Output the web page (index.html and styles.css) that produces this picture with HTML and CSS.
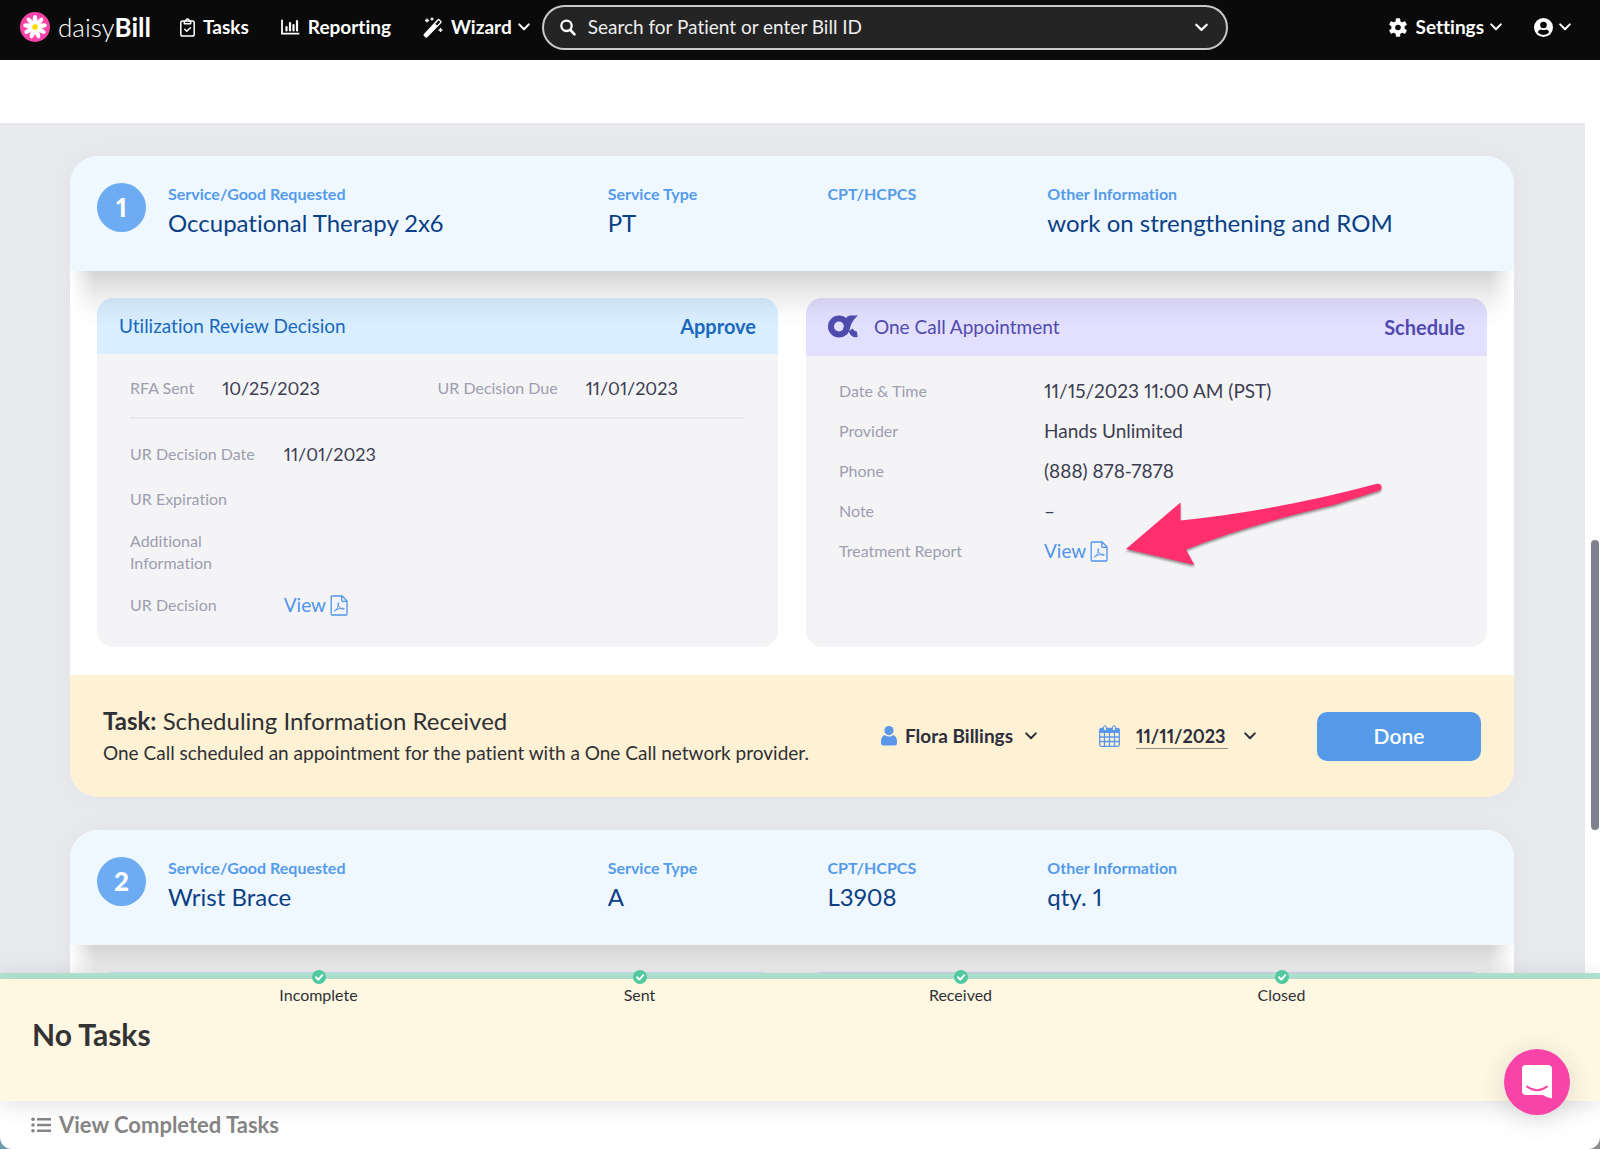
FILE: index.html
```html
<!DOCTYPE html>
<html lang="en">
<head>
<meta charset="utf-8">
<meta name="viewport" content="width=device-width, initial-scale=1">
<title>daisyBill</title>
<link rel="stylesheet" href="styles.css">
</head>
<body>
<svg class="sprite" aria-hidden="true">
  <symbol id="chevron" viewBox="0 0 12 8"><path d="M1.2 1.4 6 6.2l4.800-4.800" fill="none" stroke="currentColor" stroke-width="2" stroke-linecap="round" stroke-linejoin="round"/></symbol>
  <symbol id="pdf" viewBox="0 0 18 21"><path d="M1.200 2V19q0 1 1 1H16q1 0 1-1V6L12.200 1H2.200q-1 0-1 1zM11.800 1.200V5.400q0 1 1 1H17" fill="none" stroke="currentColor" stroke-width="1.300"/><path d="M4.200 16.200C6.800 14.800 8.800 11 8.700 8.600c0-1.400-1-1.300-.9.1.3 2.700 2.800 5.400 5.600 5.600 1.400 0 1.200-1.100-.1-1.100-2.400 0-5.600.8-7.600 1.900" fill="none" stroke="currentColor" stroke-width="1" stroke-linecap="round"/></symbol>
  <symbol id="done" viewBox="0 0 14 14"><circle cx="7" cy="7" r="7" fill="#50c8a0"/><path d="M4 7.300 6.300 9.600l4-4.400" fill="none" stroke="#fff" stroke-width="2" stroke-linecap="round" stroke-linejoin="round"/></symbol>
</svg>

<div class="app">
  <header class="nav">
    <a class="brand" href="#">
      <svg width="30" height="30" viewBox="0 0 30 30" aria-hidden="true">
        <circle cx="15" cy="15" r="15" fill="#f843a8"/>
        <g fill="#fff">
          <ellipse cx="15" cy="8" rx="2.300" ry="5"/>
          <ellipse cx="15" cy="8" rx="2.300" ry="5" transform="rotate(40 15 15)"/>
          <ellipse cx="15" cy="8" rx="2.300" ry="5" transform="rotate(80 15 15)"/>
          <ellipse cx="15" cy="8" rx="2.300" ry="5" transform="rotate(120 15 15)"/>
          <ellipse cx="15" cy="8" rx="2.300" ry="5" transform="rotate(160 15 15)"/>
          <ellipse cx="15" cy="8" rx="2.300" ry="5" transform="rotate(200 15 15)"/>
          <ellipse cx="15" cy="8" rx="2.300" ry="5" transform="rotate(240 15 15)"/>
          <ellipse cx="15" cy="8" rx="2.300" ry="5" transform="rotate(280 15 15)"/>
          <ellipse cx="15" cy="8" rx="2.300" ry="5" transform="rotate(320 15 15)"/>
        </g>
        <circle cx="15" cy="15" r="2.800" fill="#ffd800"/>
      </svg>
      <span class="brand-name">daisy<b>Bill</b></span>
    </a>
    <nav class="nav-links">
      <a class="nav-item" href="#">
        <svg width="15" height="19" viewBox="0 0 15 19" aria-hidden="true"><g fill="none" stroke="currentColor" stroke-width="1.500" stroke-linejoin="round" stroke-linecap="round"><rect x=".8" y="3" width="13.400" height="15" rx="1.800"/><path d="M4.300 5.800V3.200h1.500Q6 1 7.500 1t1.700 2.200h1.500v2.600zM4.800 11.300l2 2 3.600-3.600"/></g></svg>
        Tasks
      </a>
      <a class="nav-item" href="#">
        <svg width="19" height="16" viewBox="0 0 19 16" aria-hidden="true"><path d="M1 .8V14.600H18.300" fill="none" stroke="currentColor" stroke-width="1.800"/><path d="M5.500 8v3.500M9 4v7.500M12.500 6v5.500M16 2v9.500" stroke="currentColor" stroke-width="2.200" stroke-linecap="round"/></svg>
        Reporting
      </a>
      <button class="nav-item" type="button">
        <svg width="20" height="21" viewBox="0 0 20 21" aria-hidden="true"><path d="M.9 17 14.600 2.300q1-1 2-.1l1.700 1.700q1 1 0 2L4.300 20.300q-1 .7-2 0L.8 18.800q-.7-.9.100-1.800z" fill="currentColor"/><path d="m12.300 6.900 3.400-3.700 1.700 1.700-3.400 3.700z" fill="#0a0a0a"/><path d="M4 1.500v4M2 3.500h4M9 .5v3M7.500 2h3M17.500 11v4M15.500 13h4" stroke="currentColor" stroke-width="1.300"/></svg>
        Wizard
        <svg class="caret" width="12" height="8" aria-hidden="true"><use href="#chevron"/></svg>
      </button>
    </nav>
    <form class="search" role="search">
      <svg width="16" height="17" viewBox="0 0 16 17" aria-hidden="true"><circle cx="6.500" cy="6.800" r="5.200" fill="none" stroke="currentColor" stroke-width="2.300"/><path d="m10.500 11 4 4.300" stroke="currentColor" stroke-width="2.600" stroke-linecap="round"/></svg>
      <input type="text" placeholder="Search for Patient or enter Bill ID" aria-label="Search for Patient or enter Bill ID">
      <button type="button" aria-label="Search options"><svg width="13" height="9" aria-hidden="true"><use href="#chevron"/></svg></button>
    </form>
    <div class="nav-right">
      <button class="nav-item" type="button">
        <svg width="18" height="19" viewBox="0 0 18 19" aria-hidden="true"><g fill="currentColor"><rect x="6.800" y=".3" width="4.400" height="18.400" rx="1"/><rect x="6.800" y=".3" width="4.400" height="18.400" rx="1" transform="rotate(60 9 9.500)"/><rect x="6.800" y=".3" width="4.400" height="18.400" rx="1" transform="rotate(120 9 9.500)"/><circle cx="9" cy="9.500" r="6.700"/></g><circle cx="9" cy="9.500" r="2.800" fill="#0a0a0a"/></svg>
        Settings
        <svg class="caret" width="12" height="8" aria-hidden="true"><use href="#chevron"/></svg>
      </button>
      <button class="nav-item" type="button" aria-label="Account">
        <svg width="19" height="19" viewBox="0 0 19 19" aria-hidden="true"><circle cx="9.500" cy="9.500" r="9.500" fill="currentColor"/><circle cx="9.500" cy="7" r="3.300" fill="#0a0a0a"/><path d="M3.700 14.300Q4.500 11.600 7 11.600q2.500 1 5 0 2.500 0 3.300 2.700-2.300 2.600-5.800 2.600t-5.800-2.600z" fill="#0a0a0a"/></svg>
        <svg class="caret" width="12" height="8" aria-hidden="true"><use href="#chevron"/></svg>
      </button>
    </div>
  </header>

  <main class="page">
    <div class="requests">
      <article class="card">
        <header class="card-head">
          <span class="number">1</span>
          <dl class="summary">
            <div><dt>Service/Good Requested</dt><dd>Occupational Therapy 2x6</dd></div>
            <div><dt>Service Type</dt><dd>PT</dd></div>
            <div><dt>CPT/HCPCS</dt><dd></dd></div>
            <div><dt>Other Information</dt><dd>work on strengthening and ROM</dd></div>
          </dl>
        </header>
        <div class="panels">
          <section class="panel">
            <header class="panel-head blue"><h2>Utilization Review Decision</h2><strong>Approve</strong></header>
            <div class="panel-body">
              <dl class="dates">
                <div><dt>RFA Sent</dt><dd>10/25/2023</dd></div>
                <div><dt>UR Decision Due</dt><dd>11/01/2023</dd></div>
              </dl>
              <dl class="details review">
                <div><dt>UR Decision Date</dt><dd>11/01/2023</dd></div>
                <div><dt>UR Expiration</dt><dd></dd></div>
                <div><dt>Additional Information</dt><dd></dd></div>
                <div><dt>UR Decision</dt><dd><a class="view" href="#">View <svg width="18" height="21" aria-hidden="true"><use href="#pdf"/></svg></a></dd></div>
              </dl>
            </div>
          </section>
          <section class="panel">
            <header class="panel-head purple">
              <svg width="30" height="23" viewBox="0 0 30 23" aria-hidden="true"><circle cx="11" cy="11.500" r="8" fill="none" stroke="currentColor" stroke-width="6"/><path d="M30 .6h-6.500C19 .6 17.500 3 17 6.500l-2.200 9 4 4.500 3-6.500C23 8.500 26 4 30 .6zM20.500 16.500l4-3q1.500 2.500 4.500 3.200L29.600 22q-6 1.500-9.100-5.500z" fill="currentColor"/></svg>
              <h2>One Call Appointment</h2><strong>Schedule</strong>
            </header>
            <div class="panel-body">
              <dl class="details appointment">
                <div><dt>Date &amp; Time</dt><dd>11/15/2023 11:00 AM (PST)</dd></div>
                <div><dt>Provider</dt><dd>Hands Unlimited</dd></div>
                <div><dt>Phone</dt><dd>(888) 878-7878</dd></div>
                <div><dt>Note</dt><dd>–</dd></div>
                <div><dt>Treatment Report</dt><dd><a class="view" href="#">View <svg width="18" height="21" aria-hidden="true"><use href="#pdf"/></svg></a>
                  <svg class="arrow" width="262" height="90" viewBox="0 0 262 90" aria-hidden="true"><path d="M2 67 56.500 20.500V38.500Q156 28 253 1.800q5-.2 4.500 4.200-.2 2-2.500 2.700L210 23Q120 44 62 67.500L70.500 83z" fill="#ff2f6e"/></svg></dd></div>
              </dl>
            </div>
          </section>
        </div>
        <footer class="task">
          <div class="task-text">
            <h3><b>Task:</b> Scheduling Information Received</h3>
            <p>One Call scheduled an appointment for the patient with a One Call network provider.</p>
          </div>
          <label class="assignee">
            <svg width="16" height="20" viewBox="0 0 16 20" aria-hidden="true"><circle cx="8" cy="4.600" r="4.600" fill="#5a97ea"/><path d="M3.600 9q4.400 3.200 8.800 0Q16 10.500 16 15.500V17q0 2.500-2.500 2.500h-11Q0 19.500 0 17v-1.500Q0 10.500 3.600 9z" fill="#5a97ea"/></svg>
            <select aria-label="Assigned to"><option>Flora Billings</option></select>
            <svg width="12" height="8" aria-hidden="true"><use href="#chevron"/></svg>
          </label>
          <label class="due">
            <svg width="21" height="22" viewBox="0 0 21 22" aria-hidden="true"><g fill="none" stroke="#5a97ea" stroke-width="1.300"><rect x=".7" y="3.500" width="19.600" height="17.800" rx="1.500"/><path d="M1 12h19M1 16.500h19M5.500 8v13M10.500 8v13M15.500 8v13"/></g><path d="M1 3.500h19V8H1z" fill="#5a97ea"/><rect x="4.600" y=".7" width="2.800" height="5" rx="1.400" fill="#fef1d4" stroke="#5a97ea"/><rect x="13.600" y=".7" width="2.800" height="5" rx="1.400" fill="#fef1d4" stroke="#5a97ea"/></svg>
            <input type="text" value="11/11/2023" aria-label="Due date">
            <svg width="12" height="8" aria-hidden="true"><use href="#chevron"/></svg>
          </label>
          <button class="done" type="button">Done</button>
        </footer>
      </article>

      <article class="card">
        <header class="card-head">
          <span class="number">2</span>
          <dl class="summary">
            <div><dt>Service/Good Requested</dt><dd>Wrist Brace</dd></div>
            <div><dt>Service Type</dt><dd>A</dd></div>
            <div><dt>CPT/HCPCS</dt><dd>L3908</dd></div>
            <div><dt>Other Information</dt><dd>qty. 1</dd></div>
          </dl>
        </header>
        <div class="panels">
          <section class="panel"><div class="panel-head blue"></div></section>
          <section class="panel"><div class="panel-head purple"></div></section>
        </div>
      </article>
    </div>
    <div class="scrollbar"></div>
  </main>

  <footer class="tray">
    <ol class="steps">
      <li><svg width="14" height="14" aria-hidden="true"><use href="#done"/></svg>Incomplete</li>
      <li><svg width="14" height="14" aria-hidden="true"><use href="#done"/></svg>Sent</li>
      <li><svg width="14" height="14" aria-hidden="true"><use href="#done"/></svg>Received</li>
      <li><svg width="14" height="14" aria-hidden="true"><use href="#done"/></svg>Closed</li>
    </ol>
    <div class="tray-tasks"><h2>No Tasks</h2></div>
    <div class="tray-base">
      <a class="completed" href="#"><svg width="20" height="16" viewBox="0 0 20 16" aria-hidden="true"><path d="M6 2.200h14M6 8h14M6 13.800h14" stroke="currentColor" stroke-width="2.400"/><g fill="currentColor"><circle cx="2" cy="2.200" r="1.800"/><circle cx="2" cy="8" r="1.800"/><circle cx="2" cy="13.800" r="1.800"/></g></svg>View Completed Tasks</a>
    </div>
  </footer>
  <button class="chat" type="button" aria-label="Open chat">
    <svg width="30" height="34" viewBox="0 0 30 34" aria-hidden="true"><path d="M4 0h22q4 0 4 4v29.500q-5-.5-9-3.500H4q-4 0-4-4V4q0-4 4-4z" fill="#fff"/><path d="M5 21.500q10 7.500 20 0" fill="none" stroke="#f843a8" stroke-width="2" stroke-linecap="round"/></svg>
  </button>
</div>
</body>
</html>
```
FILE: styles.css
```css
* { box-sizing: border-box; }

body {
  margin: 0;
  font-family: Lato, "Open Sans", sans-serif;
  font-size: 19px;
  line-height: 24px;
  font-variant-ligatures: none;
  font-variant-numeric: proportional-nums;
  color: #3b3c42;
  background: #fff;
}

h2, h3, p, dl, dd, ol { margin: 0; padding: 0; }
button, input, select { font: inherit; font-variant-ligatures: none; font-variant-numeric: proportional-nums; color: inherit; background: none; border: 0; padding: 0; margin: 0; }
button { cursor: pointer; }
a { color: inherit; text-decoration: none; }
svg { flex: none; display: block; }
.sprite { position: absolute; width: 0; height: 0; }

.app {
  position: relative;
  display: flex;
  flex-direction: column;
  height: 100vh;
  overflow: hidden;
}

/* Top navigation */
.nav {
  flex: none;
  display: flex;
  align-items: center;
  height: 60px;
  padding: 0 29px 6px 20px;
  background: #0a0a0a;
  color: #fff;
}
.brand { display: flex; align-items: center; gap: 8px; width: 160px; }
.brand-name { font-size: 26px; line-height: 32px; font-weight: 300; }
.brand-name b { font-weight: 700; }
.nav-links, .nav-right { display: flex; align-items: center; gap: 32px; }
.nav-item { display: flex; align-items: center; gap: 8px; font-size: 19px; font-weight: 700; white-space: nowrap; }
.nav-item .caret { margin-left: -2px; }
.search {
  flex: 1;
  display: flex;
  align-items: center;
  gap: 12px;
  max-width: 686px;
  height: 45px;
  margin-left: 12px;
  padding: 0 18px 0 16px;
  border: 2px solid #c8c8c8;
  border-radius: 23px;
  background: #242424;
}
.search input { flex: 1; min-width: 0; font-size: 19px; outline: 0; }
.search input::placeholder { color: #eee; opacity: 1; }
.nav-right { margin-left: auto; }

/* Request list */
.page {
  position: relative;
  flex: 1;
  min-height: 0;
  overflow: hidden;
  padding: 63px 15px 0 0;
}
.requests {
  display: flex;
  flex-direction: column;
  gap: 33px;
  padding: 33px 71px 33px 70px;
  background: #e8e9ed;
}
.scrollbar {
  position: absolute;
  top: 480px;
  right: 1px;
  width: 8px;
  height: 290px;
  border-radius: 4px;
  background: #80818e;
}

.card { border-radius: 28px; background: #fff; box-shadow: 0 0 24px rgba(0, 0, 0, .03); }
.card-head {
  position: relative;
  display: flex;
  gap: 22px;
  height: 115px;
  padding: 27px 27px 0;
  border-radius: 28px 28px 0 0;
  background: #f0f8ff;
}
/* soft shadow cast over the panels below the heading */
.card-head::after {
  content: "";
  position: absolute;
  inset: 100% 0 auto 0;
  height: 56px;
  background: linear-gradient(rgba(0, 0, 0, .17), rgba(0, 0, 0, .08) 40%, rgba(0, 0, 0, .02) 75%, transparent);
  -webkit-mask-image: linear-gradient(90deg, transparent, #000 24px, #000 calc(100% - 24px), transparent);
  mask-image: linear-gradient(90deg, transparent, #000 24px, #000 calc(100% - 24px), transparent);
  pointer-events: none;
}
.number {
  flex: none;
  width: 49px;
  height: 49px;
  border-radius: 50%;
  background: #6dabf3;
  color: #fff;
  font-size: 26px;
  line-height: 49px;
  font-weight: 900;
  text-align: center;
}
.summary { flex: 1; display: grid; grid-template-columns: 2fr 1fr 1fr 2fr; }
.summary dt { font-size: 16px; line-height: 22px; font-weight: 700; color: #559beb; }
.summary dd { font-size: 24px; line-height: 36px; color: #0b3f86; white-space: nowrap; }

.panels { display: grid; grid-template-columns: 1fr 1fr; gap: 28px; padding: 27px 27px 28px; }
.panel { border-radius: 16px; background: #f4f4f6; }
.panel-head {
  display: flex;
  align-items: center;
  height: 56px;
  padding: 0 22px 1px;
  border-radius: 16px 16px 0 0;
}
.panel-head h2 { font-size: 19px; font-weight: 400; }
.panel-head strong { margin-left: auto; font-size: 20px; font-weight: 700; }
.panel-head svg { margin-right: 16px; }
.blue { background: #d9efff; color: #1b68bd; }
.purple { height: 58px; background: #e2dfff; color: #504cae; }

.panel-body { padding: 20px 33px 16px; }
.panel-body dt { font-size: 16px; line-height: 22px; color: #9d9eb0; }
.panel-body dd { font-size: 19px; color: #3c3d52; }
.dates { display: grid; grid-template-columns: 1fr 1fr; padding: 2px 0 17px; border-bottom: 2px solid #e8e8ec; }
.dates div { display: flex; align-items: center; gap: 28px; }
.dates dd, .review dd { font-size: 18px; }
.details { display: grid; }
.details div { display: grid; align-items: center; }
.review { grid-template-rows: 38px 52px 54px 52px; padding-top: 16px; }
.review div { grid-template-columns: 1fr 3fr; }
.review dt { padding-right: 27px; }
.review div:first-child dt { padding-right: 0; }
.appointment { grid-auto-rows: 40px; margin-top: -5px; }
.appointment div { grid-template-columns: 1fr 2fr; }
.appointment dd { position: relative; }
.view { display: inline-flex; align-items: center; gap: 4px; color: #4f94ec; font-size: 19px; }
.arrow { position: absolute; left: 80px; top: -57px; z-index: 2; filter: drop-shadow(0 2px 1px rgba(0, 0, 0, .4)); }

.task {
  display: flex;
  align-items: center;
  height: 122px;
  padding: 0 33px;
  border-radius: 0 0 28px 28px;
  background: #fef1d4;
  color: #2f3035;
}
.task-text { flex: 1; }
.task h3 { font-size: 24px; line-height: 34px; font-weight: 400; }
.task p { font-size: 19px; line-height: 30px; white-space: nowrap; }
.assignee, .due { display: flex; align-items: center; color: #2c2e3c; font-weight: 700; }
.assignee { gap: 8px; margin-right: 62px; font-size: 19px; }
.assignee select { appearance: none; width: 112px; }
.due { gap: 16px; margin-right: 61px; font-size: 18px; }
.due input { width: 92px; border-bottom: 1px solid #8d8b8c; }
.done {
  width: 164px;
  height: 49px;
  border-radius: 10px;
  background: #559ae8;
  color: #fff;
  font-size: 21px;
  font-weight: 600;
}

/* Bottom task tray */
.tray {
  position: relative;
  flex: none;
  border-top: 6px solid #b0e2cf;
  background: linear-gradient(90deg, #6f9cab, #8d8d8d);
  box-shadow: 0 0 20px rgba(0, 0, 0, .08);
}
.steps {
  position: absolute;
  inset: -9px 158px auto;
  z-index: 2;
  display: grid;
  grid-template-columns: repeat(4, 1fr);
  list-style: none;
  font-size: 16px;
  line-height: 22px;
  color: #2f3035;
}
.steps li { display: flex; flex-direction: column; align-items: center; }
.tray-tasks {
  position: relative;
  z-index: 1;
  height: 122px;
  padding: 37px 32px;
  background: #fef8e3;
  box-shadow: 0 6px 20px rgba(0, 0, 0, .1);
}
.tray-tasks h2 { font-size: 30px; line-height: 36px; font-weight: 700; color: #333; }
.tray-base { height: 48px; padding: 12px 31px; border-radius: 0 0 12px 12px; background: #fff; }
.completed { display: inline-flex; align-items: center; gap: 8px; font-size: 22px; font-weight: 700; color: #858585; }

.chat {
  position: absolute;
  right: 30px;
  bottom: 34px;
  z-index: 3;
  display: grid;
  place-items: center;
  width: 66px;
  height: 66px;
  border-radius: 50%;
  background: #f843a8;
  box-shadow: 0 4px 28px rgba(0, 0, 0, .14);
}
```
